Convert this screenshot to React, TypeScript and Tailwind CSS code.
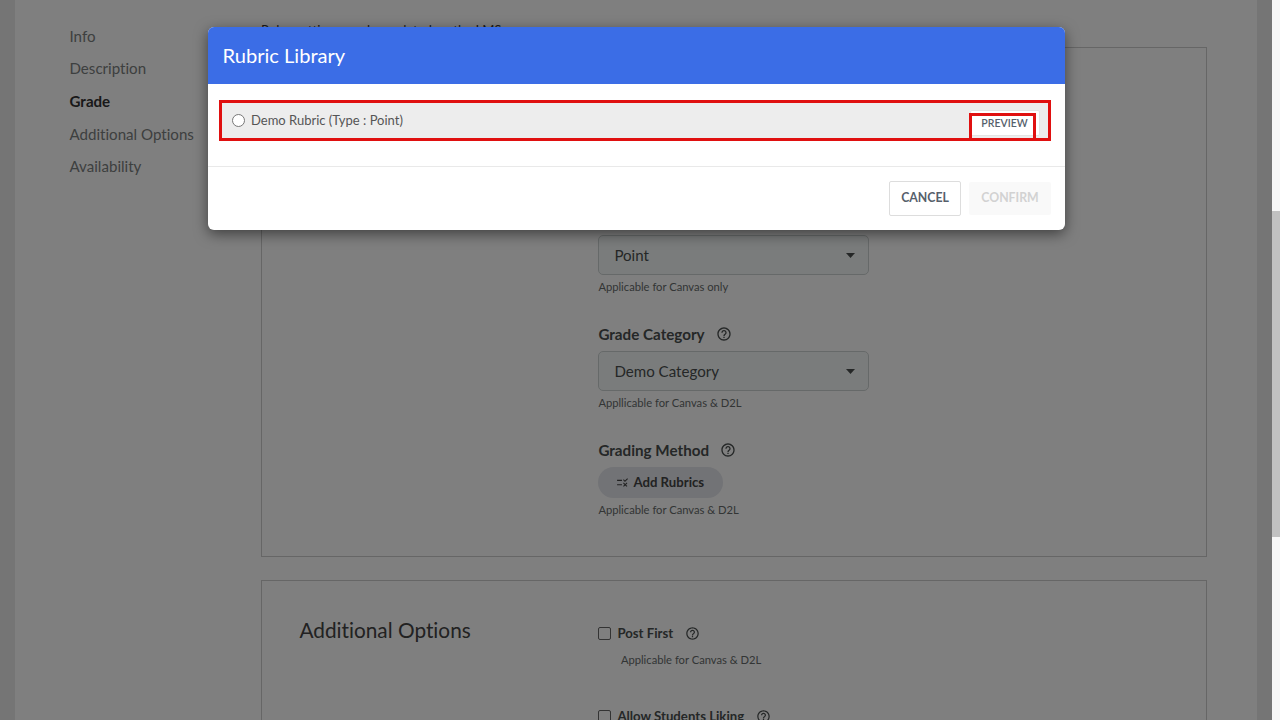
import type { ReactNode } from "react";
import { MdHelpOutline, MdRule } from "react-icons/md";

const NAV_ITEMS = ["Info", "Description", "Grade", "Additional Options", "Availability"];
const ACTIVE_ITEM = "Grade";

function Label({ children }: { children: ReactNode }) {
  return (
    <div className="flex h-5 items-center gap-[11px] text-[15.200px] font-bold leading-5 text-[#4a4f4f]">
      {children}
      <MdHelpOutline className="size-4" />
    </div>
  );
}

function SelectBox({ value }: { value: string }) {
  return (
    <div className="flex h-10 w-[271px] items-center justify-between rounded-[5px] border border-[#cdd3d3] bg-[#f5f9f8] pl-[15px] pr-[13px] text-[15.100px] text-[#4a4f4f]">
      {value}
      <svg width="9" height="5" viewBox="0 0 9 5" className="fill-[#4a4f4f]">
        <path d="M0 0h9L4.500 5z" />
      </svg>
    </div>
  );
}

function Hint({ children }: { children: ReactNode }) {
  return <p className="text-[11.200px] leading-4 text-[#666b6b]">{children}</p>;
}

function CheckRow({ label }: { label: string }) {
  return (
    <div className="flex h-5 items-center text-[13.200px] font-bold text-[#4a4f4f]">
      <span className="mr-1.5 size-[13px] rounded-[2px] border border-[#666]" />
      <span className="pt-0.5">{label}</span>
      <MdHelpOutline className="ml-3 size-[15px]" />
    </div>
  );
}

function Sidebar() {
  return (
    <nav className="w-[246px] shrink-0 pl-[54.500px] pt-[19.700px] text-[15.100px] text-[#7b8080]">
      {NAV_ITEMS.map((item) => (
        <a
          key={item}
          className={item === ACTIVE_ITEM ? "block h-[32.650px] leading-8 font-bold text-[#333]" : "block h-[32.650px] leading-8"}
        >
          {item}
        </a>
      ))}
    </nav>
  );
}

function RubricLibrary() {
  return (
    <div className="absolute left-[208px] top-[27px] w-[857px] overflow-hidden rounded-md bg-white shadow-[0_4px_14px_rgba(0,0,0,0.5)]">
      <header className="flex h-[57px] items-center bg-[#3b6de6] pl-[14.500px] text-[20.100px] text-white">
        Rubric Library
      </header>
      <div className="h-[83px] border-b border-[#e9e9e9] px-[11px] pt-4">
        <div className="relative flex h-[41px] w-[832px] items-center border-3 border-[#e01010] bg-[#ededed] pl-2.5 text-[13px] text-[#555]">
          <span className="mr-1.5 size-[13px] rounded-full border border-[#777] bg-white" />
          Demo Rubric (Type : Point)
          <button className="absolute right-2 top-[7px] h-[26px] w-[70px] rounded-[2px] border border-[#e4e4e4] bg-white pr-px text-[10.500px] leading-[24px] font-semibold text-[#56606b]">
            PREVIEW
          </button>
          <span className="absolute -bottom-[3px] right-3 h-7 w-[67px] border-3 border-[#e01010]" />
        </div>
      </div>
      <footer className="flex h-[63px] items-center justify-end gap-2 pr-3.5 text-[12.300px] font-bold">
        <button className="h-[35px] w-[72px] rounded-[2px] border border-[#ddd] text-[#56606b]">CANCEL</button>
        <button className="h-[33px] w-[82px] rounded-[2px] bg-[#f9f9f9] text-[#d2d2d2]">CONFIRM</button>
      </footer>
    </div>
  );
}

export default function App() {
  return (
    <div className="relative flex h-[720px] w-[1280px] overflow-hidden bg-[#ebebeb] font-[Lato,sans-serif] [font-variant-ligatures:none]">
      <main className="ml-[15px] flex w-[1242px] shrink-0 bg-white">
        <Sidebar />
        <div className="w-[946px] shrink-0">
          <p className="h-[47px] pt-5 text-[13.100px] leading-5 text-[#333]">Rules settings can be updated on the LMS</p>
          <section className="h-[510px] border border-[#ccc] pl-[336.400px] pt-[187px]">
            <SelectBox value="Point" />
            <div className="pt-1">
              <Hint>Applicable for Canvas only</Hint>
            </div>
            <div className="pt-[29px]">
              <Label>Grade Category</Label>
            </div>
            <div className="pt-[7px]">
              <SelectBox value="Demo Category" />
            </div>
            <div className="pt-1">
              <Hint>Appllicable for Canvas &amp; D2L</Hint>
            </div>
            <div className="pt-[29px]">
              <Label>Grading Method</Label>
            </div>
            <button className="mt-[7px] flex h-[31px] w-[125px] items-center gap-1 rounded-full bg-[#e4e6ec] pl-[18px] text-[13.200px] font-bold text-[#444]">
              <MdRule className="size-[13px]" />
              Add Rubrics
            </button>
            <div className="pt-1">
              <Hint>Applicable for Canvas &amp; D2L</Hint>
            </div>
          </section>
          <section className="mt-[23px] flex h-[300px] border border-[#ccc] pl-[37.400px] pt-[34px]">
            <h2 className="w-[299px] text-[20.800px] leading-[30px] text-[#444]">Additional Options</h2>
            <div className="pt-2">
              <CheckRow label="Post First" />
              <div className="pl-[22.500px] pt-[9px]">
                <Hint>Applicable for Canvas &amp; D2L</Hint>
              </div>
              <div className="pt-[38px]">
                <CheckRow label="Allow Students Liking" />
              </div>
            </div>
          </section>
        </div>
      </main>
      <div className="absolute inset-0 bg-black/50" />
      <div className="absolute right-0 top-0 h-full w-2 bg-[#f7f7f7] pt-[211px]">
        <div className="h-[326px] bg-[#c1c1c1]" />
      </div>
      <RubricLibrary />
    </div>
  );
}
